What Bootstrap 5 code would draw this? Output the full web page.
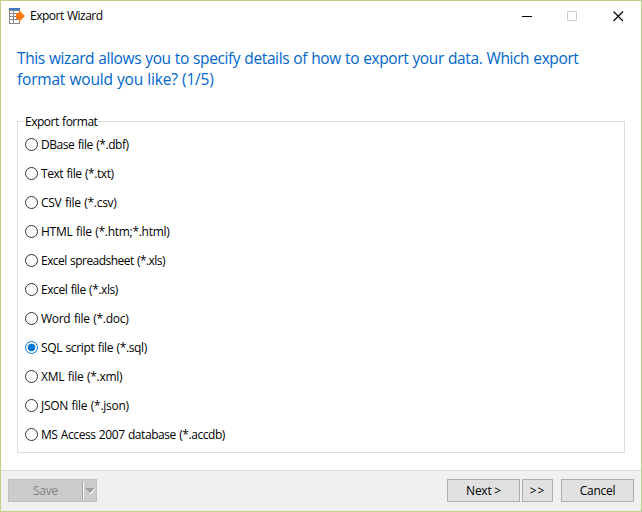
<!DOCTYPE html>
<html lang="en">
<head>
<meta charset="utf-8">
<meta name="viewport" content="width=device-width, initial-scale=1">
<title>Export Wizard</title>
<link href="https://cdn.jsdelivr.net/npm/bootstrap@5.3.0/dist/css/bootstrap.min.css" rel="stylesheet">
<style>
body{font-family:"Open Sans","Noto Sans",sans-serif;font-size:12px;line-height:16px;color:#000}
.wizard{height:512px;border:1px solid #bdd384;background:#fff}
.titlebar{height:30px;padding:0 17px 0 8px}
.titlebar svg{display:block}
.win-title{padding-left:5px;letter-spacing:-.5px;word-spacing:.6px}
.win-buttons{gap:35px}
.win-buttons svg:last-child{margin-left:1px}
.intro{font-size:15.5px;line-height:21px;color:#0066cc;margin:17px 0 0 16px;letter-spacing:-.39px;word-spacing:.5px;white-space:nowrap}
.intro span{letter-spacing:-.2px}
.format-box{position:relative;margin:31px 16px 0 16px;border:1px solid #dcdcdc;height:332px;padding:8px 7px 0}
.format-box legend{position:absolute;left:6px;top:-8px;width:auto;margin:0;padding:0 0 0 1px;background:#fff;font-size:12px;line-height:16px;letter-spacing:-.5px;word-spacing:.8px}
.choice{height:29px;padding:0;gap:3px;min-height:0;margin:0;letter-spacing:-.28px;word-spacing:.7px}
.choice .form-check-input{width:13px;height:13px;margin:0;border:1px solid #333;background:#fff;float:none;flex:none}
.choice .form-check-input:checked{border-color:#0078d7;background:radial-gradient(circle,#0078d7 3.5px,transparent 4.2px)}
.snug{letter-spacing:-.44px}
.snugger{letter-spacing:-.54px}
.snug-slight{letter-spacing:-.37px}
.footer-bar{height:41px;background:#f0f0f0;border-top:1px solid #dadada;padding:8px 7px 0}
.next-group{gap:2px}
.wbtn{height:23px;border:1px solid #adadad;border-radius:0;background:#e1e1e1;font-size:12px;line-height:21px;padding:0;color:#000;letter-spacing:-.25px}
.w-wide{width:73px}
.w-skip{width:31px;letter-spacing:.8px}
.save-split{width:89px}
.save-split .wbtn{opacity:1;background:#ccc;border-color:#bfbfbf;color:#838383}
.save-main{width:74px;border-right:0!important}
.save-drop{width:15px;border-left:0!important}
.save-drop svg{display:block}
</style>
</head>
<body>
<div class="wizard d-flex flex-column">
  <header class="titlebar d-flex align-items-center flex-shrink-0">
    <svg width="16" height="16" viewBox="0 0 16 16" shape-rendering="crispEdges">
      <path fill="#858585" d="M0 2h11v14H0z"/>
      <path fill="#fff" d="M1 3h3v2H1zm4 0h5v2H5zM1 6h3v2H1zm4 0h5v2H5zM1 9h3v2H1zm4 0h5v2H5zM1 12h3v3H1zm4 0h5v3H5z"/>
      <path fill="#3f7abf" d="M0 0h11v2H0z"/>
      <path fill="#ff7a0d" shape-rendering="auto" d="M7 5h3V2l6 6-6 6v-3H7z"/>
    </svg>
    <span class="win-title">Export Wizard</span>
    <div class="win-buttons d-flex ms-auto">
      <svg width="10" height="11" viewBox="0 0 10 11"><path d="M0 5.5h10" stroke="#000"/></svg>
      <svg width="10" height="11" viewBox="0 0 10 11"><path d="M.5.5h9v9h-9z" fill="none" stroke="#ccc"/></svg>
      <svg width="11" height="11" viewBox="0 0 11 11"><path d="M.5.5l9.5 9.5M10 .5L.5 10" stroke="#000" stroke-width="1.15"/></svg>
    </div>
  </header>

  <p class="intro">This wizard allows you to specify details of how to export your data. Which export<br><span>format would you like? (1/5)</span></p>

  <fieldset class="format-box">
    <legend>Export format</legend>
    <label class="choice form-check d-flex align-items-center snug"><input class="form-check-input" type="radio" name="format">DBase file (*.dbf)</label>
    <label class="choice form-check d-flex align-items-center snug"><input class="form-check-input" type="radio" name="format">Text file (*.txt)</label>
    <label class="choice form-check d-flex align-items-center"><input class="form-check-input" type="radio" name="format">CSV file (*.csv)</label>
    <label class="choice form-check d-flex align-items-center"><input class="form-check-input" type="radio" name="format">HTML file (*.htm;*.html)</label>
    <label class="choice form-check d-flex align-items-center snugger"><input class="form-check-input" type="radio" name="format">Excel spreadsheet (*.xls)</label>
    <label class="choice form-check d-flex align-items-center snug"><input class="form-check-input" type="radio" name="format">Excel file (*.xls)</label>
    <label class="choice form-check d-flex align-items-center"><input class="form-check-input" type="radio" name="format">Word file (*.doc)</label>
    <label class="choice form-check d-flex align-items-center snug-slight"><input class="form-check-input" type="radio" name="format" checked>SQL script file (*.sql)</label>
    <label class="choice form-check d-flex align-items-center"><input class="form-check-input" type="radio" name="format">XML file (*.xml)</label>
    <label class="choice form-check d-flex align-items-center"><input class="form-check-input" type="radio" name="format">JSON file (*.json)</label>
    <label class="choice form-check d-flex align-items-center snug"><input class="form-check-input" type="radio" name="format">MS Access 2007 database (*.accdb)</label>
  </fieldset>

  <footer class="footer-bar d-flex mt-auto">
    <div class="save-split d-flex">
      <button class="btn wbtn save-main" disabled>Save</button>
      <button class="btn wbtn save-drop" disabled aria-label="Save options">
        <svg width="14" height="21" viewBox="0 0 14 21"><path d="M.5 2v17" stroke="#a0a0a0"/><path d="M1.5 2v17" stroke="#fff"/><path d="M13 8v1L8.5 14 7.5 13z" fill="#fff" stroke="#fff" stroke-width=".8"/><path d="M3 8h10l-5 5z" fill="#a0a0a0"/></svg>
      </button>
    </div>
    <div class="next-group d-flex ms-auto">
      <button class="btn wbtn w-wide">Next &gt;</button>
      <button class="btn wbtn w-skip">&gt;&gt;</button>
    </div>
    <button class="btn wbtn w-wide ms-2">Cancel</button>
  </footer>
</div>
<script src="https://cdn.jsdelivr.net/npm/bootstrap@5.3.0/dist/js/bootstrap.bundle.min.js"></script>
</body>
</html>
